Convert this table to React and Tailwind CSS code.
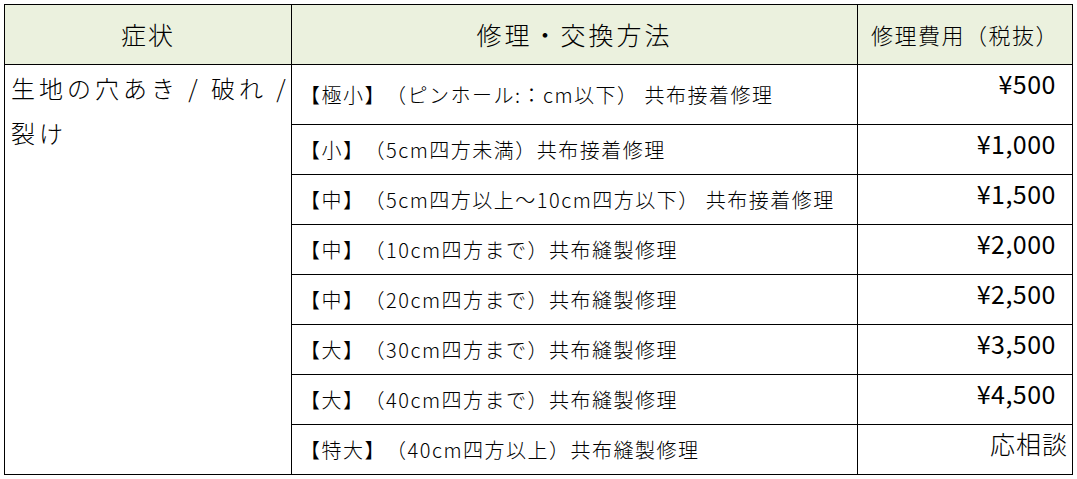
import React from 'react';

const rows = [
  { item: '【極小】（ピンホール:：cm以下） 共布接着修理', price: '¥500', tall: true },
  { item: '【小】（5cm四方未満）共布接着修理', price: '¥1,000' },
  { item: '【中】（5cm四方以上～10cm四方以下） 共布接着修理', price: '¥1,500' },
  { item: '【中】（10cm四方まで）共布縫製修理', price: '¥2,000' },
  { item: '【中】（20cm四方まで）共布縫製修理', price: '¥2,500' },
  { item: '【大】（30cm四方まで）共布縫製修理', price: '¥3,500' },
  { item: '【大】（40cm四方まで）共布縫製修理', price: '¥4,500' },
  { item: '【特大】（40cm四方以上）共布縫製修理', price: '応相談', ask: true },
];

const App = () => {
  return (
    <div className="min-h-[479px] w-[1077px] bg-white pl-[4px] pt-[4px] font-light text-black [text-spacing-trim:space-all]" style={{ fontFamily: '"Noto Sans CJK JP", sans-serif' }}>
      <table className="table-fixed border-collapse">
        <colgroup>
          <col className="w-[287px]" />
          <col className="w-[566px]" />
          <col className="w-[215px]" />
        </colgroup>
        <thead>
          <tr className="h-[60px] bg-[#ebf1de]">
            <th className="border-[1.5px] border-black p-0 text-center align-middle text-[25px] font-light tracking-[2px]">症状</th>
            <th className="border-[1.5px] border-black p-0 text-center align-middle text-[25px] font-light tracking-[3px]">修理・交換方法</th>
            <th className="border-[1.5px] border-black p-0 text-center align-middle text-[22px] font-light tracking-[1.5px]">修理費用（税抜）</th>
          </tr>
        </thead>
        <tbody>
          {rows.map((row, i) => (
            <tr key={i} className={row.tall ? 'h-[60px]' : 'h-[50px]'}>
              {i === 0 && (
                <td rowSpan={rows.length} className="border-[1.5px] border-black pl-[6px] pt-0 align-top text-[24px] leading-[45px] tracking-[4px]">
                  生地の穴あき / 破れ /<br />裂け
                </td>
              )}
              <td className="border-[1.5px] border-black pl-[8px] align-middle text-[20px] tracking-[1.5px] whitespace-nowrap">
                {row.item}
              </td>
              <td className={`border-[1.5px] border-black pt-[0px] text-right align-top text-[25px] leading-[36px] ${row.ask ? 'pr-[4px] tracking-[1px] font-light' : 'pr-[16px] tracking-[0.5px] font-normal'}`}>
                {row.price}
              </td>
            </tr>
          ))}
        </tbody>
      </table>
    </div>
  );
};

export default App;
